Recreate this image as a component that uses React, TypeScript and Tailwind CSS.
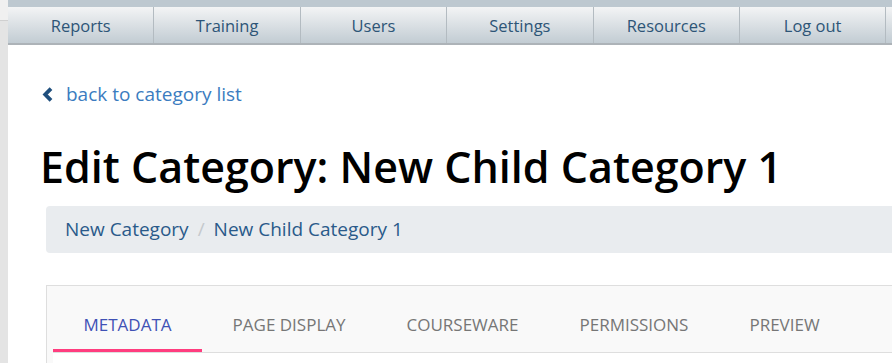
const navItems = ['Reports', 'Training', 'Users', 'Settings', 'Resources', 'Log out', ''];
const tabs = ['Metadata', 'Page Display', 'Courseware', 'Permissions', 'Preview'];

export default function App() {
  return (
    <div className="flex w-[892px] h-[363px] overflow-hidden bg-white font-['Open_Sans',sans-serif]">
      {/* left window strip */}
      <div className="w-[8px] shrink-0 flex flex-col">
        <div className="h-[21px] shrink-0 bg-[#f0f0f0] border-b border-[#d0d0d0]" />
        <div className="flex-1 bg-[#e4e4e4]" />
      </div>

      <div className="flex-1 min-w-0">
        <div className="h-[7px] bg-[#bdc8d0]" />
        <nav className="flex h-[38px] border-b-2 border-[#adb3b8]">
          {navItems.map((item, i) => (
            <div
              key={i}
              className="w-[146.4px] shrink-0 flex items-center justify-center pt-[3px] border-r border-[#b3bbc1] bg-gradient-to-b from-[#f3f4f5] to-[#c2ccd3] text-[16.5px] text-[#2d5577]"
            >
              {item}
            </div>
          ))}
        </nav>

        <div className="pl-[32px]">
          <a className="mt-[37px] flex items-center gap-[12px] text-[19px] text-[#3b7cc0] leading-[24px]">
            <svg width="12" height="15" viewBox="0 0 12 15" className="ml-[2px]">
              <polyline points="9,1.6 3.2,7.5 9,13.4" fill="none" stroke="#1f4f7d" strokeWidth="3.8" />
            </svg>
            back to category list
          </a>

          <h1 className="mt-[35px] text-[43px] leading-[52px] font-semibold text-black">
            Edit Category: New Child Category 1
          </h1>

          <div className="ml-[6px] mt-[13px] h-[47px] rounded-l-[4px] bg-[#e9ecef] flex items-center px-[19px] text-[19px] text-[#2a5a8a]">
            <span>New Category</span>
            <span className="px-[9px] text-[#c5c9cd]">/</span>
            <span>New Child Category 1</span>
          </div>

          <div className="ml-[6px] mt-[32px] border-t border-l border-[#dedede] bg-[#f9f9f9] pl-[6px]">
            <div className="flex h-[67px] items-end border-b border-[#dedede]">
              {tabs.map((t, i) => (
                <div
                  key={t}
                  className={
                    i === 0
                      ? 'h-[51px] px-[30.5px] flex items-center uppercase text-[17px] text-[#3f51b5] border-b-[3px] border-[#ff3d7f]'
                      : 'h-[51px] px-[30.5px] flex items-center uppercase text-[17px] text-[#767676] border-b-[3px] border-transparent'
                  }
                >
                  {t}
                </div>
              ))}
            </div>
            <div className="h-[20px] bg-white" />
          </div>
        </div>
      </div>
    </div>
  );
}
